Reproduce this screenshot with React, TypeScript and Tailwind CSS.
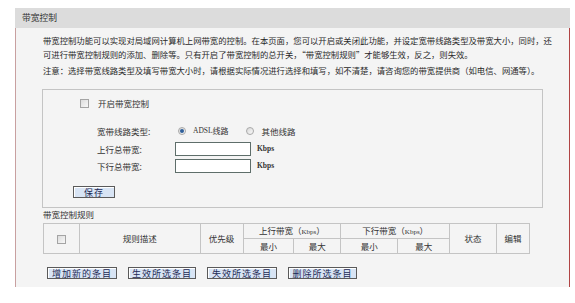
import React from "react";

const cjk = { fontFamily: '"Noto Sans CJK SC", "Noto Sans", sans-serif' };
const serif = { fontFamily: '"Liberation Serif", serif' };

function Checkbox() {
  return (
    <span className="inline-block w-[9px] h-[9px] border border-[#a4a4a4] bg-gradient-to-br from-[#dcdcdc] to-[#f8f8f8]" />
  );
}

function Radio({ checked }: { checked?: boolean }) {
  return (
    <span className="inline-flex w-[8px] h-[8px] rounded-full border border-[#a8a8a8] bg-gradient-to-br from-[#d8d8d8] to-[#fafafa] items-center justify-center">
      {checked && <span className="w-[4px] h-[4px] rounded-full bg-[#2f5f9a]" />}
    </span>
  );
}

function Btn({ children, w }: { children: React.ReactNode; w: string }) {
  return (
    <div
      className={`${w} h-[12px] flex items-center justify-center border border-[#5a5a5a] bg-[#d8e4f4] shadow-[inset_1px_1px_0_#ffffff] text-[9px] leading-none tracking-[1px] text-[#1c2a55]`}
    >
      {children}
    </div>
  );
}

const cell = "border border-[#c4c4c4] text-center font-normal";

export default function App() {
  return (
    <div className="w-[575px] h-[303px] bg-white text-[#333] overflow-hidden" style={cjk}>
      <div className="ml-[15px] mt-[8px] w-[555px]">
        <div className="h-[20px] bg-[#dcdcdc] flex items-center pl-[7px] text-[8.75px] leading-none text-[#333]">
          带宽控制
        </div>
        <div className="h-[259px] bg-[#f4f4f4] border-l border-l-[#c8a0a0] border-r border-r-[#b04444]">
          <div className="pl-[27px] pt-[5px] text-[8.35px] leading-[14px] text-[#2a2a2a]">
            <div>带宽控制功能可以实现对局域网计算机上网带宽的控制。在本页面，您可以开启或关闭此功能，并设定宽带线路类型及带宽大小，同时，还</div>
            <div>可进行带宽控制规则的添加、删除等。只有开启了带宽控制的总开关，“带宽控制规则”才能够生效，反之，则失效。</div>
            <div className="mt-[2px]">注意：选择带宽线路类型及填写带宽大小时，请根据实际情况进行选择和填写，如不清楚，请咨询您的带宽提供商（如电信、网通等）。</div>
          </div>

          <div className="ml-[26px] mt-[12px] w-[501px] h-[119px] border border-[#c4c4c4] text-[8.5px] leading-none">
            <div className="mt-[6px] h-[14px] flex items-center pl-[37px]">
              <Checkbox />
              <span className="ml-[9px]">开启带宽控制</span>
            </div>
            <div className="mt-[14px] h-[14px] flex items-center pl-[54px]">
              <span className="w-[81px]">宽带线路类型:</span>
              <Radio checked />
              <span className="ml-[7px] text-[7.5px]" style={serif}>ADSL</span>
              <span className="text-[8px]">线路</span>
              <span className="ml-[17px]"><Radio /></span>
              <span className="ml-[8px]">其他线路</span>
            </div>
            <div className="mt-[4px] h-[14px] flex items-center pl-[54px]">
              <span className="w-[78px]">上行总带宽:</span>
              <span className="w-[76px] h-[14px] bg-white border border-[#5e6e6a]" />
              <span className="ml-[6px] text-[7.5px] font-bold" style={serif}>Kbps</span>
            </div>
            <div className="mt-[3px] h-[14px] flex items-center pl-[54px]">
              <span className="w-[78px]">下行总带宽:</span>
              <span className="w-[76px] h-[14px] bg-white border border-[#5e6e6a]" />
              <span className="ml-[6px] text-[7.5px] font-bold" style={serif}>Kbps</span>
            </div>
            <div className="mt-[13px] pl-[30px]">
              <Btn w="w-[42px]">保存</Btn>
            </div>
          </div>

          <div className="pl-[27px] h-[12px] flex items-center text-[8.5px] leading-none">带宽控制规则</div>

          <table className="ml-[27px] mt-[3px] w-[487px] border-collapse text-[8.5px] leading-none">
            <colgroup>
              <col className="w-[36px]" />
              <col className="w-[121px]" />
              <col className="w-[43px]" />
              <col className="w-[51px]" />
              <col className="w-[47px]" />
              <col className="w-[57px]" />
              <col className="w-[52px]" />
              <col className="w-[47px]" />
              <col className="w-[33px]" />
            </colgroup>
            <tbody>
              <tr className="h-[15px]">
                <td rowSpan={2} className={cell}><span className="inline-flex align-middle"><Checkbox /></span></td>
                <td rowSpan={2} className={cell}>规则描述</td>
                <td rowSpan={2} className={cell}>优先级</td>
                <td colSpan={2} className={cell}>上行带宽（<span className="text-[7px]" style={serif}>Kbps</span>）</td>
                <td colSpan={2} className={cell}>下行带宽（<span className="text-[7px]" style={serif}>Kbps</span>）</td>
                <td rowSpan={2} className={cell}>状态</td>
                <td rowSpan={2} className={cell}>编辑</td>
              </tr>
              <tr className="h-[15px]">
                <td className={cell}>最小</td>
                <td className={cell}>最大</td>
                <td className={cell}>最小</td>
                <td className={cell}>最大</td>
              </tr>
            </tbody>
          </table>

          <div className="ml-[31px] mt-[13px] flex gap-[11px]">
            <Btn w="w-[70px]">增加新的条目</Btn>
            <Btn w="w-[68px]">生效所选条目</Btn>
            <Btn w="w-[70px]">失效所选条目</Btn>
            <Btn w="w-[69px]">删除所选条目</Btn>
          </div>
        </div>
      </div>
    </div>
  );
}
